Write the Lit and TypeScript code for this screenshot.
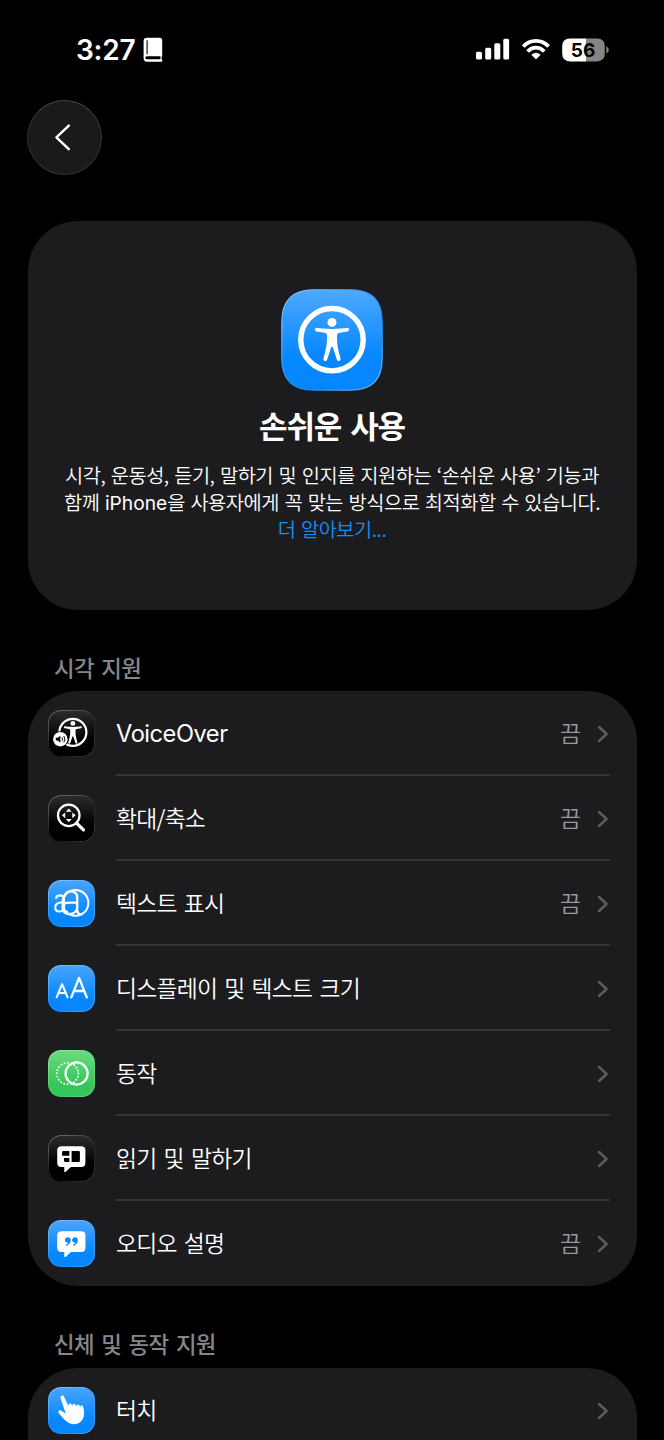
import { LitElement, html, svg, css, nothing, TemplateResult } from "lit";
import { customElement, property } from "lit/decorators.js";

const person = svg`
  <circle cx="0" cy="-18.3" r="4.5"/>
  <path d="M-15.5-12.9C-17.6-13.2-17.4-9.5-15.4-9.2L-7.2-8Q-5-7.6-5-5.5V-1C-5 5-6.8 11-8.5 17.5C-9.1 20.6-5.7 21.4-4.8 18.8L-1 7Q0 5.2 1 7L4.8 18.8C5.7 21.4 9.1 20.6 8.5 17.5C6.8 11 5 5 5-1V-5.5Q5-7.6 7.2-8L15.4-9.2C17.4-9.5 17.6-13.2 15.5-12.9C8-11.4-8-11.4-15.5-12.9Z"/>`;

const bubble = svg`<path fill="#fff" d="M14 11.4H34Q38.2 11.4 38.2 15.6V28.6Q38.2 32.8 34 32.8H23.4L18.2 37.6Q16.6 38.8 16.6 36.8V32.8H13.8Q9.4 32.8 9.4 28.4V15.6Q9.4 11.4 14 11.4Z"/>`;

const glyphs: Record<string, TemplateResult> = {
  voiceover: svg`
    <circle cx="25.4" cy="22.8" r="13.8" fill="none" stroke="#fff" stroke-width="2.3"/>
    <g fill="#fff" transform="translate(25.4 23.6) scale(.54)">${person}</g>
    <circle cx="12.6" cy="29.8" r="8.2" fill="#000"/>
    <circle cx="12.6" cy="29.8" r="7.4" fill="#fff"/>
    <g transform="translate(-.2 .2)">
      <path d="M8.2 28.2H10.1L12.8 26V33.2L10.1 31H8.2Z"/>
      <path d="M14.5 27.8Q15.7 29.6 14.5 31.4M16.4 26.4Q18.5 29.6 16.4 32.8" fill="none" stroke="#000" stroke-width="1"/>
    </g>`,
  zoom: svg`
    <circle cx="21.2" cy="20.8" r="11" fill="none" stroke="#fff" stroke-width="2.3"/>
    <path d="M29 28.6L36.2 35.6" stroke="#fff" stroke-width="3.3" stroke-linecap="round"/>
    <path fill="#fff" d="M21.2 13.8L24.2 17.2H18.2ZM21.2 27.8L24.2 24.4H18.2ZM14.2 20.8L17.6 17.8V23.8ZM28.2 20.8L24.8 17.8V23.8Z"/>`,
  hover: svg`
    <g fill="none" stroke="#fff" stroke-linecap="round">
      <circle cx="28" cy="23.4" r="13.2" stroke-width="2"/>
      <path stroke-width="2.1" d="M8.3 18.4C9 14.8 16.2 14.6 16.4 19.2V29M16.3 22.8C11 22.8 7.4 23.6 7.4 27.8C7.4 33.6 15.2 33.3 16.4 28.6Q16.6 32.8 19.6 32.4"/>
      <path stroke-width="2.4" d="M17.2 16C18.4 10 29.6 9.8 29.8 18V30.4Q30 35.2 34 35M29.7 22.8C21 22.8 14.8 22.6 14.8 28.3C14.8 37.2 28.4 36.6 29.8 28.8"/>
    </g>`,
  size: svg`
    <g fill="none" stroke="#fff" stroke-linecap="round" stroke-linejoin="round">
      <path stroke-width="2.1" d="M8.8 33L14.4 19.6L20 33M10.8 28.5H18"/>
      <path stroke-width="2.4" d="M23.8 33L31.7 13.2L39.6 33M26.6 26.6H36.8"/>
    </g>`,
  motion: svg`
    <circle cx="29.2" cy="24" r="11.3" fill="none" stroke="#fff" stroke-width="2.3"/>
    <circle cx="20" cy="24" r="11" fill="none" stroke="#fff" stroke-width="2" stroke-linecap="round" stroke-dasharray="0 3.455"/>`,
  speech: svg`${bubble}
    <path d="M15.6 16.4H21.8V21.3H14.4V17.6Q14.4 16.4 15.6 16.4ZM24.1 16.4H31.3Q32.6 16.4 32.6 17.7V26.3Q32.6 27.6 31.3 27.6H24.1ZM16.4 23.5H21.8V27.6H17.6Q16.4 27.6 16.4 26.4Z"/>`,
  audio: svg`${bubble}
    <path fill="#1287fa" d="M20.2 17.7A3 3 0 0 1 23.2 20.8C23.2 23.4 21.6 25.5 19.1 26.3C18 26.6 17.8 25.5 18.6 25.1C19.8 24.5 20.5 23.9 20.8 23.2A2.8 2.8 0 1 1 20.2 17.7ZM27.5 17.7A3 3 0 0 1 30.5 20.8C30.5 23.4 28.9 25.5 26.4 26.3C25.3 26.6 25.1 25.5 25.9 25.1C27.1 24.5 27.8 23.9 28.1 23.2A2.8 2.8 0 1 1 27.5 17.7Z"/>`,
  touch: svg`
    <path fill="#fff" d="M12.8 11.2C12.1 8.9 15.4 7.7 16.4 10L21 19.9Q20.3 17.2 22.3 16.9Q24.1 16.7 24.8 19.4Q24.6 17.2 26.4 17Q28.2 16.9 28.9 19.9Q28.9 17.8 30.5 17.8Q32 17.8 32.8 20.2Q33.8 17.5 35.4 19.2C36.8 22 37.2 26 36.6 29.6C35.3 36.2 28.8 39.6 22.6 37.2C17.6 35.2 14.8 31 10.7 26.3C9.8 24.4 12 23.1 13.7 24.2L18.2 27.3Z"/>`,
};

@customElement("icon-tile")
class IconTile extends LitElement {
  @property() name = "";
  @property() tone = "blue";
  static styles = css`
    :host { display: block; width: 47px; height: 47px; flex: none; }
    .tile { width: 47px; height: 47px; border-radius: 13px; position: relative; }
    .tile::after {
      content: ""; position: absolute; inset: 0; border-radius: inherit; padding: 1px;
      background: linear-gradient(135deg, #ffffff59, #ffffff20 42%, #ffffff10 62%, #ffffff48);
      mask: linear-gradient(#000 0 0) content-box exclude, linear-gradient(#000 0 0);
    }
    .blue { background: linear-gradient(#4aa5fd, #0788ff 68%, #0586ff); }
    .green { background: linear-gradient(#6cdb80, #34c659 75%); }
    .black { background: linear-gradient(#2d2d2e, #000 62%); }
    svg { display: block; width: 47px; height: 47px; }
  `;
  render() {
    return html`<div class="tile ${this.tone}"><svg viewBox="0 0 48 48">${glyphs[this.name]}</svg></div>`;
  }
}

@customElement("setting-row")
class SettingRow extends LitElement {
  @property() icon = "";
  @property() tone = "blue";
  @property() label = "";
  @property() value = "";
  @property({ type: Boolean }) last = false;
  static styles = css`
    :host { display: flex; height: 85px; padding-left: 20.5px; padding-right: 27px; gap: 21px; }
    icon-tile { margin-top: 19px; }
    .body { flex: 1; display: flex; align-items: center; height: 85px; box-sizing: border-box; border-bottom: 2px solid #343436; padding-top: 2px; }
    .last { border-bottom-color: transparent; }
    .label { flex: 1; font-size: 22.8px; letter-spacing: -0.75px; word-spacing: 2.8px; color: #fff; white-space: nowrap; padding-bottom: 2px; }
    .latin { font: 400 23.6px Inter, sans-serif; letter-spacing: -0.45px; padding: 0; }
    .value { color: #97979e; font-size: 22.8px; margin-right: 15.5px; padding-bottom: 2px; }
    .chev { width: 12px; height: 18px; margin-right: 1px; }
  `;
  render() {
    const latin = /^[A-Za-z]+$/.test(this.label);
    return html`
      <icon-tile name=${this.icon} tone=${this.tone}></icon-tile>
      <div class="body ${this.last ? "last" : ""}">
        <span class="label ${latin ? "latin" : ""}">${this.label}</span>
        ${this.value ? html`<span class="value">${this.value}</span>` : nothing}
        <svg class="chev" viewBox="0 0 12 18"><path d="M2 2L9.6 9L2 16" fill="none" stroke="#5c5c61" stroke-width="2.5" stroke-linecap="round" stroke-linejoin="round"/></svg>
      </div>`;
  }
}

const vision = [
  ["voiceover", "black", "VoiceOver", "끔"],
  ["zoom", "black", "확대/축소", "끔"],
  ["hover", "blue", "텍스트 표시", "끔"],
  ["size", "blue", "디스플레이 및 텍스트 크기", ""],
  ["motion", "green", "동작", ""],
  ["speech", "black", "읽기 및 말하기", ""],
  ["audio", "blue", "오디오 설명", "끔"],
];

@customElement("app-root")
class AppRoot extends LitElement {
  static styles = css`
    :host {
      display: block; width: 664px; height: 1440px; overflow: hidden; background: #000; color: #fff;
      font-family: "Noto Sans CJK KR", sans-serif; font-weight: 350;
    }
    .status { display: flex; align-items: center; height: 100px; box-sizing: border-box; padding: 0 54px 0 76px; }
    .time { font: 600 28px/32px Inter, sans-serif; letter-spacing: -0.2px; width: 60px; }
    .book { width: 20px; height: 26px; margin-left: 7px; }
    .right { margin-left: auto; display: block; width: 134px; height: 26px; }
    .pct { font: 700 19px Inter, sans-serif; }
    .back {
      width: 75px; height: 75px; border-radius: 50%; margin-left: 27px; padding: 0; display: grid; place-items: center;
      background: #1a1a1a; border: 1.5px solid #363636; box-sizing: border-box; border-top-color: #454545; border-left-color: #303030;
    }
    .back svg { width: 74px; height: 74px; margin: -2px 0 0 -2px; }
    .card { margin: 0 27.5px; background: #1c1c1e; }
    .hero { margin-top: 46px; height: 389px; border-radius: 50px; display: flex; flex-direction: column; align-items: center; padding-top: 68px; box-sizing: border-box; }
    .logo { width: 102px; height: 102px; display: block; }
    h1 { margin: 10px 0 0; font-size: 31px; line-height: 48px; font-weight: 700; letter-spacing: -1.2px; word-spacing: 3.4px; }
    .desc { margin-top: 12px; font-size: 19.8px; line-height: 27px; text-align: center; white-space: nowrap; letter-spacing: -0.5px; word-spacing: 1.6px; }
    .desc div { height: 27px; }
    .latin { font-family: Inter, sans-serif; letter-spacing: 0; font-weight: 400; font-size: 19.2px; }
    .link { color: #158ff5; }
    h2 { margin: 0 0 0 54px; font-size: 22.4px; line-height: 34px; font-weight: 500; letter-spacing: -0.65px; word-spacing: 3px; color: #86868b; }
    .first { padding-top: 40px; height: 41px; }
    .second { padding-top: 40px; height: 42px; }
    .list { border-radius: 50px; overflow: hidden; }
    .cut { height: 85px; border-radius: 50px 50px 0 0; }
  `;
  render() {
    return html`
      <div class="status">
        <span class="time">3:27</span>
        <svg class="book" viewBox="0 0 20 26">
          <path d="M4 .8H16.5Q19.2.8 19.2 3.5V18.7Q17.6 20.7 19.2 22.7V24.7H3.8Q.6 24.5.6 21V4Q.6.8 4 .8Z" fill="#fff"/>
          <path d="M4.1 3.2V17.3" stroke="#000" stroke-width="1.1"/>
          <path d="M3.8 19.2H17.6Q17 20.7 17.6 22.2H3.8Q2.3 21.9 2.3 20.7T3.8 19.2Z" fill="#000"/>
        </svg>
        <svg class="right" viewBox="0 0 134 26">
          <g fill="#fff">
            <rect x="0" y="14.8" width="6" height="7.7" rx="1.6"/><rect x="9.2" y="10.7" width="6" height="11.8" rx="1.6"/>
            <rect x="18.3" y="6.2" width="6" height="16.3" rx="1.6"/><rect x="27.3" y="1.7" width="5.8" height="20.8" rx="1.6"/>
            <path d="M60 22L55.8 17.8Q60 14.5 64.2 17.8Z" stroke="#fff" stroke-width=".8" stroke-linejoin="round"/>
          </g>
          <g fill="none" stroke="#fff" stroke-width="3.7"><path d="M47.2 9.6C54.1 1.9 65.7 1.9 72.6 9.6"/><path d="M51.6 14.4C56.2 9.4 63.6 9.4 68.2 14.4"/></g>
          <path d="M94 1.4H110V24.4H94Q86.2 24.4 86.2 16.6V9.2Q86.2 1.4 94 1.4Z" fill="#fff"/>
          <path d="M110 1.4H121Q128.8 1.4 128.8 9.2V16.6Q128.8 24.4 121 24.4H110Z" fill="#858585"/>
          <path d="M130.3 9.2Q132.8 10.2 132.8 12.9T130.3 16.6Z" fill="#858585"/>
          <text class="pct" x="107" y="19.8" text-anchor="middle" fill="#000">56</text>
        </svg>
      </div>
      <button class="back" aria-label="뒤로">
        <svg viewBox="0 0 74 74"><path d="M41.8 25.6L29.4 37.3L41.8 49.2" fill="none" stroke="#fff" stroke-width="2.4" stroke-linecap="round" stroke-linejoin="round"/></svg>
      </button>
      <section class="card hero">
        <svg class="logo" viewBox="0 0 102 102">
          <defs>
            <linearGradient id="b" x2="0" y2="1"><stop stop-color="#4fa9fe"/><stop offset=".65" stop-color="#0788ff"/><stop offset="1" stop-color="#0586ff"/></linearGradient>
            <linearGradient id="e" x2="1" y2="1"><stop stop-color="#8dcaff"/><stop offset=".4" stop-color="#3b9cf8"/><stop offset=".65" stop-color="#1585ee"/><stop offset="1" stop-color="#7fc2ff"/></linearGradient>
          </defs>
          <path d="M33 .8H69C91 .8 101.2 11 101.2 33V69C101.2 91 91 101.2 69 101.2H33C11 101.2.8 91 .8 69V33C.8 11 11 .8 33 .8Z" fill="url(#b)" stroke="url(#e)" stroke-width="1.2"/>
          <circle cx="51" cy="50.7" r="31.2" fill="none" stroke="#fff" stroke-width="5.4"/>
          <g fill="#fff" transform="translate(51 51.7)">${person}</g>
        </svg>
        <h1>손쉬운 사용</h1>
        <div class="desc">
          <div>시각, 운동성, 듣기, 말하기 및 인지를 지원하는 ‘손쉬운 사용’ 기능과</div>
          <div>함께 <span class="latin">iPhone</span>을 사용자에게 꼭 맞는 방식으로 최적화할 수 있습니다.</div>
          <div class="link">더 알아보기...</div>
        </div>
      </section>
      <h2 class="first">시각 지원</h2>
      <section class="card list">
        ${vision.map(([i, t, l, v], n) => html`<setting-row icon=${i} tone=${t} label=${l} value=${v} ?last=${n === vision.length - 1}></setting-row>`)}
      </section>
      <h2 class="second">신체 및 동작 지원</h2>
      <section class="card cut"><setting-row icon="touch" tone="blue" label="터치" last></setting-row></section>`;
  }
}
